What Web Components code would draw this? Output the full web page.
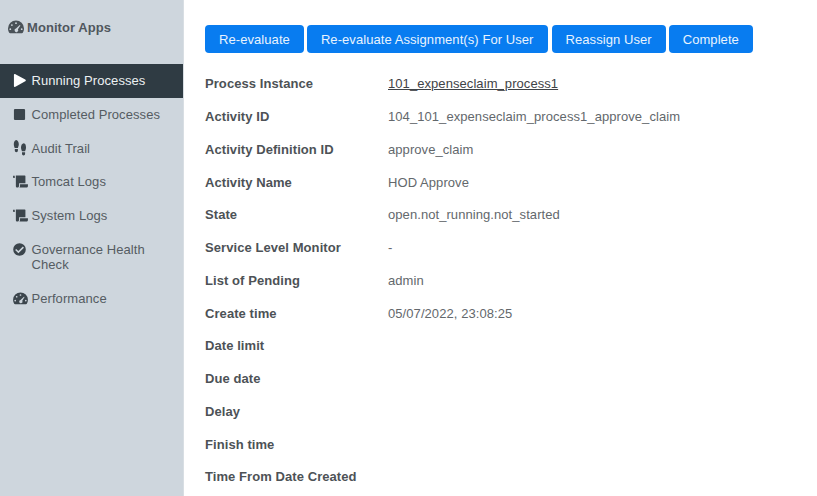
<!DOCTYPE html>
<html>
<head>
<meta charset="utf-8">
<title>Monitor Apps</title>
<style>
    html, body { margin: 0; height: 496px; overflow: hidden; background: #fff; }
    body { display: flex; font-family: "Liberation Sans", Arial, sans-serif; font-size: 13px; letter-spacing: .07px; }
</style>
</head>
<body>
<template id="icons">
    <svg data-name="gauge" viewBox="0 0 16 14"><path fill-rule="evenodd" d="M8 .5A8 8 0 0 0 0 8.400c0 1.600.5 3.100 1.200 4.300.2.300.5.500.9.500h11.800c.4 0 .7-.2.9-.5.7-1.200 1.200-2.700 1.200-4.300A8 8 0 0 0 8 .5ZM8 2.300a.9.9 0 1 1 0 1.800.9.9 0 0 1 0-1.800ZM3.900 4.200a.9.9 0 1 1 0 1.800.9.9 0 0 1 0-1.800ZM2.300 8.300a.9.9 0 1 1 0 1.800.9.9 0 0 1 0-1.800Zm11.400 0a.9.9 0 1 1 0 1.800.9.9 0 0 1 0-1.800ZM11.800 5l.6.5-2.500 3.800A1.800 1.800 0 1 1 8 8.500Z"/></svg>
    <svg data-name="play" viewBox="0 0 14 14"><path d="M1 1.200C1 .3 1.900-.2 2.600.2l10.600 5.700c.8.500.8 1.600 0 2L2.600 13.800c-.7.400-1.600-.1-1.600-1Z"/></svg>
    <svg data-name="stop" viewBox="0 0 14 14"><rect x="1" y="1" width="12" height="12" rx="1.200"/></svg>
    <svg data-name="shoes" viewBox="0 0 14 16"><path d="M3.200 0C1.500 0 .8 2.300.8 4.300c0 1.500.5 2.500.9 3.700h3.200c.3-1.200.9-2.100.9-3.700C5.800 2.300 4.800 0 3.200 0ZM1.800 9h3.100v1.500c0 1-.7 1.700-1.500 1.700s-1.600-.7-1.600-1.700ZM10.800 3.300C9.100 3.300 8 5.500 8 7.500c0 1.600.6 2.500.9 3.700h3.200c.4-1.200.9-2.200.9-3.700 0-2-.6-4.200-2.200-4.200ZM9 12.200h3.100v1.600c0 1-.7 1.700-1.500 1.700S9 14.800 9 13.800Z"/></svg>
    <svg data-name="scroll" viewBox="0 0 16 14"><path d="M0 .8h1.800v2.500H.6L0 2.600ZM3 .5h9.600c.4 0 .7.300.7.700V9H6.500v2.500c0 1.400-1 2-2 2-.9 0-1.500-.6-1.500-1.500ZM7.500 10H16v1.800c0 1-.8 1.700-1.700 1.700H6.800c.5-.5.700-1.200.7-2Z"/></svg>
    <svg data-name="check" viewBox="0 0 14 14"><path fill-rule="evenodd" d="M7 .2a6.800 6.800 0 1 1 0 13.600A6.800 6.800 0 0 1 7 .2Zm3.600 3.700L5.800 8.600 3.500 6.400 2.300 7.600l3.500 3.500 6-6Z"/></svg>
</template>

<side-bar>
    <side-title icon="gauge">Monitor Apps</side-title>
    <side-item icon="play" active>Running Processes</side-item>
    <side-item icon="stop">Completed Processes</side-item>
    <side-item icon="shoes">Audit Trail</side-item>
    <side-item icon="scroll">Tomcat Logs</side-item>
    <side-item icon="scroll">System Logs</side-item>
    <side-item icon="check">Governance Health Check</side-item>
    <side-item icon="gauge">Performance</side-item>
</side-bar>

<main-panel>
    <action-bar>
        <action-button>Re-evaluate</action-button>
        <action-button style="margin-left:3px">Re-evaluate Assignment(s) For User</action-button>
        <action-button style="margin-left:4px">Reassign User</action-button>
        <action-button style="margin-left:3px">Complete</action-button>
    </action-bar>
    <info-row label="Process Instance"><u>101_expenseclaim_process1</u></info-row>
    <info-row label="Activity ID">104_101_expenseclaim_process1_approve_claim</info-row>
    <info-row label="Activity Definition ID">approve_claim</info-row>
    <info-row label="Activity Name">HOD Approve</info-row>
    <info-row label="State">open.not_running.not_started</info-row>
    <info-row label="Service Level Monitor">-</info-row>
    <info-row label="List of Pending">admin</info-row>
    <info-row label="Create time">05/07/2022, 23:08:25</info-row>
    <info-row label="Date limit"></info-row>
    <info-row label="Due date"></info-row>
    <info-row label="Delay"></info-row>
    <info-row label="Finish time"></info-row>
    <info-row label="Time From Date Created"></info-row>
</main-panel>

<script>
function iconMarkup(name) {
    const svg = document.getElementById('icons').content.querySelector(`[data-name="${name}"]`);
    return svg ? svg.outerHTML : '';
}

class SideBar extends HTMLElement {
    constructor() {
        super();
        this.attachShadow({ mode: 'open' });
        this.shadowRoot.innerHTML = `
            <style>
                :host {
                    display: flex;
                    flex-direction: column;
                    flex: none;
                    box-sizing: border-box;
                    width: 184px;
                    height: 496px;
                    background: #ced6dd;
                    border-right: 1px solid #d8dee3;
                    color: #4c5358;
                }
            </style>
            <slot></slot>
        `;
    }
}

class SideTitle extends HTMLElement {
    constructor() {
        super();
        this.attachShadow({ mode: 'open' });
        this.shadowRoot.innerHTML = `
            <style>
                :host {
                    display: flex;
                    align-items: center;
                    gap: 3px;
                    height: 18px;
                    padding: 18px 0 28px 8px;
                    font-weight: bold;
                    font-size: 13px;
                    color: #50575d;
                }
                svg { width: 16px; height: 14px; fill: #4a5258; }
            </style>
            ${iconMarkup(this.getAttribute('icon'))}<slot></slot>
        `;
    }
}

class SideItem extends HTMLElement {
    constructor() {
        super();
        this.attachShadow({ mode: 'open' });
        this.shadowRoot.innerHTML = `
            <style>
                :host {
                    display: flex;
                    box-sizing: border-box;
                    min-height: 33.7px;
                    padding: 9.4px 16px 0 13px;
                    line-height: 15px;
                    color: #555c62;
                    font-size: 13px;
                }
                :host([active]) {
                    background: #2f3b43;
                    color: #ecf0f2;
                    padding-top: 9px;
                }
                :host([icon="check"]) { min-height: 49px; }
                .icon {
                    flex: none;
                    width: 18.5px;
                    height: 15px;
                    display: flex;
                    align-items: center;
                }
                svg { width: 13px; height: 13px; fill: #3b454c; }
                :host([icon="gauge"]) svg, :host([icon="scroll"]) svg { width: 15px; }
                :host([icon="shoes"]) svg { height: 16px; width: 14px; flex: none; }
                :host([active]) svg { fill: #fff; }
            </style>
            <span class="icon">${iconMarkup(this.getAttribute('icon'))}</span>
            <span><slot></slot></span>
        `;
    }
}

class MainPanel extends HTMLElement {
    constructor() {
        super();
        this.attachShadow({ mode: 'open' });
        this.shadowRoot.innerHTML = `
            <style>
                :host {
                    display: block;
                    flex: 1;
                    padding: 25px 0 0 21px;
                }
            </style>
            <slot></slot>
        `;
    }
}

class ActionBar extends HTMLElement {
    constructor() {
        super();
        this.attachShadow({ mode: 'open' });
        this.shadowRoot.innerHTML = `
            <style>
                :host { display: flex; margin-bottom: 14.5px; }
            </style>
            <slot></slot>
        `;
    }
}

class ActionButton extends HTMLElement {
    constructor() {
        super();
        this.attachShadow({ mode: 'open' });
        this.shadowRoot.innerHTML = `
            <style>
                :host {
                    display: flex;
                    align-items: center;
                    height: 28px;
                    padding: 0 14px;
                    border-radius: 4px;
                    background: #087cf0;
                    color: #e8f3fe;
                    font-size: 13px;
                }
            </style>
            <slot></slot>
        `;
    }
}

class InfoRow extends HTMLElement {
    constructor() {
        super();
        this.attachShadow({ mode: 'open' });
        this.shadowRoot.innerHTML = `
            <style>
                :host {
                    display: grid;
                    grid-template-columns: 183px 1fr;
                    align-items: center;
                    height: 32.75px;
                    font-size: 13px;
                    color: #63686c;
                }
                .label { font-weight: bold; color: #4d5256; white-space: nowrap; }
                ::slotted(u) { color: #3f4347; }
            </style>
            <div class="label">${this.getAttribute('label')}</div>
            <div><slot></slot></div>
        `;
    }
}

customElements.define('side-bar', SideBar);
customElements.define('side-title', SideTitle);
customElements.define('side-item', SideItem);
customElements.define('main-panel', MainPanel);
customElements.define('action-bar', ActionBar);
customElements.define('action-button', ActionButton);
customElements.define('info-row', InfoRow);
</script>
</body>
</html>
